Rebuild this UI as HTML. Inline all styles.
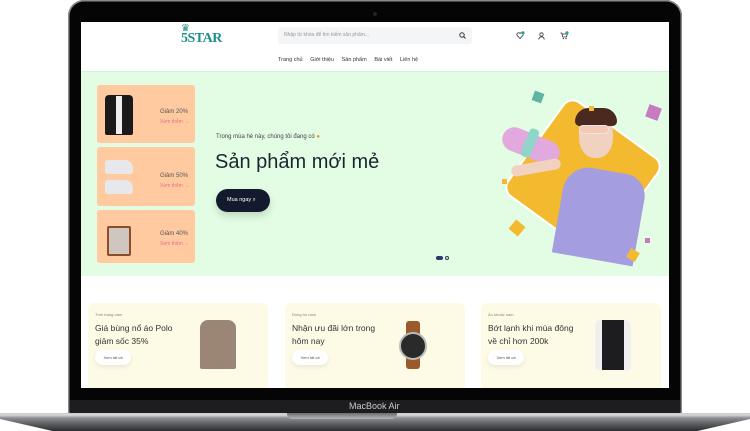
<!DOCTYPE html>
<html><head><meta charset="utf-8"><style>
*{margin:0;padding:0;box-sizing:border-box}
body{width:750px;height:431px;background:#fff;position:relative;overflow:hidden;font-family:"Liberation Sans",sans-serif}
.abs{position:absolute}
.lid{left:68px;top:0;width:614px;height:414px;background:#050505;border-radius:16px 16px 0 0;box-shadow:0 0 0 1.5px #8a8a8e inset}
.screen{left:81px;top:22px;width:588px;height:366px;background:#fff;overflow:hidden}
.chin{left:70px;top:400px;width:610px;height:14px;background:#1d1d1f}
.base{left:0;top:413px;width:750px;height:18px;background:linear-gradient(#c9c9cc 0,#d8d8da 2px,#8d8e92 5px,#55565a 12px,#2b2c30 18px);clip-path:polygon(0 0,100% 0,100% 6px,93% 100%,7% 100%,0 6px)}
.notch{left:287px;top:413px;width:110px;height:6px;background:linear-gradient(#6c6d70,#b5b6b8);border-radius:0 0 5px 5px}
.t{position:absolute;white-space:nowrap}
.pc{position:absolute;left:16px;width:98px;background:#ffcaa0;border-radius:3px}
.pc .g{position:absolute;left:63px;font-size:6px;color:#555}
.pc .x{position:absolute;left:63px;font-size:5px;color:#f06a8a}
.bc{position:absolute;top:281px;width:180px;height:90px;background:#fdfbe6;border-radius:6px}
.bc .l{position:absolute;left:7px;top:9px;font-size:4px;color:#888}
.bc .h{position:absolute;left:7px;top:19px;font-size:8.5px;line-height:13px;color:#333}
.bc .b{position:absolute;left:7px;top:47px;width:36px;height:15px;background:#fff;border-radius:8px;font-size:4px;color:#555;text-align:center;line-height:15px;box-shadow:0 2px 4px rgba(0,0,0,.08)}
</style></head><body>
<div class="abs lid"></div>
<div class="abs" style="left:373px;top:12px;width:4px;height:4px;border-radius:50%;background:#222"></div>
<div class="abs screen">
  <div class="t" style="left:100px;top:1px;font-size:10px;color:#1f8f8a;">♛</div>
  <div class="t" style="left:100px;top:9px;font-family:'Liberation Serif',serif;font-weight:bold;font-size:14px;color:#1f8f8a;letter-spacing:-.5px">5STAR</div>
  <div class="abs" style="left:197px;top:5px;width:194px;height:17px;background:#f4f5f7;border-radius:3px"></div>
  <div class="t" style="left:203px;top:10px;font-size:5px;color:#999">Nhập từ khóa để tìm kiếm sản phẩm...</div>
  <svg class="abs" style="left:378px;top:10px" width="7" height="7" viewBox="0 0 7 7"><circle cx="3" cy="3" r="2.2" fill="none" stroke="#333" stroke-width="1"/><path d="M4.6 4.6L6.5 6.5" stroke="#333" stroke-width="1"/></svg>
  <svg class="abs" style="left:435px;top:9px" width="9" height="9" viewBox="0 0 9 9"><path d="M4 7.5L1.2 4.5a1.7 1.7 0 0 1 2.8-2a1.7 1.7 0 0 1 2.8 2z" fill="none" stroke="#333" stroke-width=".8"/><circle cx="7" cy="1.8" r="1.6" fill="#2aa198"/></svg>
  <svg class="abs" style="left:457px;top:10px" width="7" height="8" viewBox="0 0 7 8"><circle cx="3.5" cy="2.5" r="1.7" fill="none" stroke="#333" stroke-width=".8"/><path d="M.8 7.5a2.7 2.7 0 0 1 5.4 0" fill="none" stroke="#333" stroke-width=".8"/></svg>
  <svg class="abs" style="left:479px;top:9px" width="9" height="9" viewBox="0 0 9 9"><path d="M.5 2h1.3l1 4h3.7l.8-3H2.4" fill="none" stroke="#333" stroke-width=".8"/><circle cx="3.3" cy="7.6" r=".6" fill="#333"/><circle cx="6" cy="7.6" r=".6" fill="#333"/><circle cx="7" cy="1.8" r="1.6" fill="#2aa198"/></svg>
  <div class="t" style="left:197px;top:35px;font-size:5.5px;color:#333">Trang chủ&nbsp;&nbsp;&nbsp;&nbsp;&nbsp;Giới thiệu&nbsp;&nbsp;&nbsp;&nbsp;&nbsp;Sản phẩm&nbsp;&nbsp;&nbsp;&nbsp;&nbsp;Bài viết&nbsp;&nbsp;&nbsp;&nbsp;&nbsp;Liên hệ</div>
  <div class="abs" style="left:0;top:49px;width:588px;height:205px;background:#e2fde4;border-top:1px solid #d5efd8"></div>
  <div class="pc" style="top:63px;height:58px">
    <div class="abs" style="left:8px;top:10px;width:28px;height:40px;background:#1a1a1a;border-radius:4px 4px 2px 2px"></div>
    <div class="abs" style="left:19px;top:11px;width:6px;height:38px;background:#eee"></div>
    <div class="g" style="top:24px">Giảm 20%</div><div class="x" style="top:34px">Xem thêm →</div></div>
  <div class="pc" style="top:125px;height:59px">
    <div class="abs" style="left:8px;top:13px;width:28px;height:14px;background:#e6e8ec;border-radius:3px 8px 3px 3px"></div>
    <div class="abs" style="left:8px;top:33px;width:28px;height:14px;background:#e6e8ec;border-radius:3px 8px 3px 3px"></div>
    <div class="g" style="top:26px">Giảm 50%</div><div class="x" style="top:36px">Xem thêm →</div></div>
  <div class="pc" style="top:188px;height:53px">
    <div class="abs" style="left:10px;top:16px;width:24px;height:30px;background:#cfc6bf;border:2px solid #8a4e2a;border-radius:2px"></div>
    <div class="g" style="top:21px">Giảm 40%</div><div class="x" style="top:31px">Xem thêm →</div></div>
  <div class="t" style="left:135px;top:112px;font-size:6px;color:#444">Trong mùa hè này, chúng tôi đang có <span style="color:#f28c28">●</span></div>
  <div class="t" style="left:134px;top:129px;font-size:20px;color:#1d2430">Sản phẩm mới mẻ</div>
  <div class="abs" style="left:135px;top:167px;width:54px;height:23px;background:#141a2e;border-radius:12px;box-shadow:0 4px 8px rgba(0,0,0,.15);color:#fff;font-size:5.5px;line-height:23px;padding-left:11px">Mua ngay ⌕</div>
  <div class="abs" style="left:443px;top:96px;width:118px;height:118px;background:#f3b92f;border:2.5px solid #fff;border-radius:12px;transform:rotate(36deg)"></div>
  <div class="abs" style="left:420px;top:112px;width:60px;height:24px;background:#e2a9de;border-radius:12px;transform:rotate(22deg)"></div>
  <div class="abs" style="left:444px;top:106px;width:10px;height:30px;background:#8fd6c8;border-radius:4px;transform:rotate(22deg)"></div>
  <div class="abs" style="left:498px;top:92px;width:34px;height:44px;background:#f1d1c0;border-radius:45%"></div>
  <div class="abs" style="left:494px;top:86px;width:42px;height:18px;background:#4a2a1e;border-radius:18px 18px 6px 6px"></div>
  <div class="abs" style="left:498px;top:103px;width:30px;height:9px;background:#f7c9b5;border-radius:4px;border:1px solid #e8e8e8"></div>
  <div class="abs" style="left:478px;top:148px;width:82px;height:90px;background:#a49ee0;border-radius:26px 22px 0 0;transform:rotate(10deg)"></div>
  <div class="abs" style="left:430px;top:140px;width:50px;height:11px;background:#f1d1c0;border-radius:6px;transform:rotate(-10deg)"></div>
  <div class="abs" style="left:452px;top:70px;width:10px;height:10px;background:#5fb3a1;transform:rotate(20deg)"></div>
  <div class="abs" style="left:566px;top:84px;width:13px;height:13px;background:#c77ac0;transform:rotate(20deg)"></div>
  <div class="abs" style="left:508px;top:84px;width:5px;height:5px;background:#f3b92f"></div>
  <div class="abs" style="left:421px;top:157px;width:5px;height:5px;background:#f3b92f"></div>
  <div class="abs" style="left:430px;top:200px;width:12px;height:12px;background:#f3b92f;transform:rotate(40deg)"></div>
  <div class="abs" style="left:564px;top:216px;width:5px;height:5px;background:#c77ac0"></div>
  <div class="abs" style="left:547px;top:228px;width:10px;height:10px;background:#f3b92f;transform:rotate(30deg)"></div>
  <div class="abs" style="left:355px;top:234px;width:7px;height:4px;background:#2b3a67;border-radius:2px"></div>
  <div class="abs" style="left:364px;top:234px;width:4px;height:4px;border:1px solid #2b3a67;border-radius:50%"></div>
  <div class="bc" style="left:7px"><div class="l">Thời trang nam</div><div class="h">Giá bùng nổ áo Polo<br>giảm sốc 35%</div><div class="b">Xem tất cả</div>
    <div class="abs" style="left:112px;top:17px;width:36px;height:49px;background:#9b8575;border-radius:8px 8px 2px 2px"></div></div>
  <div class="bc" style="left:204px"><div class="l">Đồng hồ nam</div><div class="h">Nhận ưu đãi lớn trong<br>hôm nay</div><div class="b">Xem tất cả</div>
    <div class="abs" style="left:121px;top:18px;width:14px;height:48px;background:#9a5a2c;border-radius:3px"></div>
    <div class="abs" style="left:114px;top:29px;width:28px;height:28px;background:#2a2a2a;border:2px solid #bbb;border-radius:50%"></div></div>
  <div class="bc" style="left:400px"><div class="l">Áo khoác nam</div><div class="h">Bớt lạnh khi mùa đông<br>về chỉ hơn 200k</div><div class="b">Xem tất cả</div>
    <div class="abs" style="left:114px;top:17px;width:36px;height:50px;background:#1d1d1f;border-radius:6px 6px 2px 2px;border-left:7px solid #f0f0f0;border-right:7px solid #f0f0f0"></div></div>
</div>
<div class="abs chin"></div>
<div class="t" style="left:349px;top:401px;font-size:9px;color:#c8c8c8">MacBook Air</div>
<div class="abs base"></div>
<div class="abs notch"></div>
</body></html>
